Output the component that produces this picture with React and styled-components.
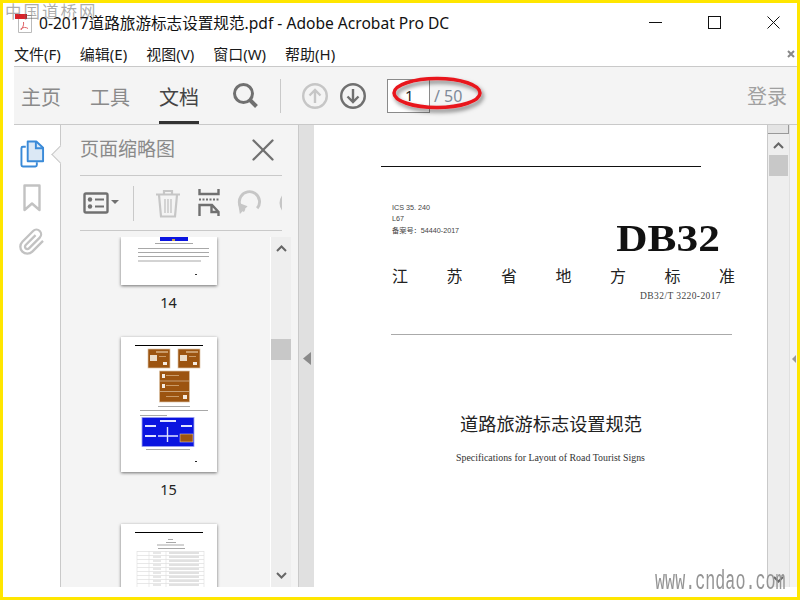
import React from 'react';
import styled, { createGlobalStyle } from 'styled-components';
import { X } from 'lucide-react';

const GlobalStyle = createGlobalStyle`
  html, body {
    margin: 0;
    padding: 0;
    background: #fff;
  }
`;

const Frame = styled.div`
  position: relative;
  box-sizing: border-box;
  width: 800px;
  height: 600px;
  border: 3px solid #ffe600;
  padding-bottom: 10px;
  background: #fff;
  display: flex;
  flex-direction: column;
  overflow: hidden;
  font-family: "Noto Sans", "Noto Sans CJK SC", sans-serif;
`;

const TitleBar = styled.div`
  height: 38px;
  flex: none;
  display: flex;
  align-items: center;
  padding-left: 12px;
`;

const PdfIcon = styled.svg`
  width: 17px;
  height: 19px;
  flex: none;
  margin: 3px 7px 0 0;
`;

const Title = styled.div`
  flex: 1;
  font-size: 15.6px;
  color: #111;
  white-space: nowrap;
`;

const WinButtons = styled.div`
  display: flex;
  align-items: center;
  gap: 46px;
  padding-right: 17px;
`;

const MenuBar = styled.div`
  height: 25px;
  flex: none;
  display: flex;
  align-items: center;
  gap: 19px;
  padding: 0 2px 0 11px;
  font-size: 15px;
  color: #1a1a1a;
`;

const MenuClose = styled.svg`
  margin-left: auto;
  flex: none;
`;

const Toolbar = styled.div`
  height: 59px;
  box-sizing: border-box;
  flex: none;
  margin-left: 11px;
  background: #f4f4f4;
  border-top: 1px solid #c9c9c9;
  border-bottom: 1px solid #c9c9c9;
  display: flex;
  align-items: center;
`;

const Tab = styled.div`
  height: 57px;
  box-sizing: border-box;
  display: flex;
  align-items: center;
  width: 40px;
  justify-content: center;
  margin-left: ${p => p.$gap}px;
  font-size: 20px;
  color: ${p => (p.$active ? '#444' : '#8a8a8a')};
  border-bottom: 3px solid ${p => (p.$active ? '#333' : 'transparent')};
  padding-top: 5px;
  font-family: "Noto Sans CJK SC", sans-serif;
`;

const ToolDivider = styled.div`
  width: 1px;
  height: 34px;
  background: #c9c9c9;
  margin: 0 20px 0 22px;
  flex: none;
`;

const ArrowGap = styled.span`
  width: 10px;
  flex: none;
`;

const PageBox = styled.div`
  box-sizing: border-box;
  width: 43px;
  height: 34px;
  margin-left: 20px;
  background: #fff;
  border: 1px solid #8a8a8a;
  font-size: 15px;
  color: #222;
  padding: 5px 0 0 17px;
`;

const PageCount = styled.div`
  margin-left: 4px;
  font-size: 16px;
  color: #7f8a99;
`;

const Login = styled.div`
  margin-left: auto;
  margin-right: 10px;
  font-size: 20px;
  color: #a0a0a0;
  font-family: "Noto Sans CJK SC", sans-serif;
`;

const Body = styled.div`
  flex: 1;
  min-height: 0;
  display: flex;
`;

const IconRail = styled.div`
  position: relative;
  width: 58px;
  box-sizing: border-box;
  flex: none;
  background: #fff;
  border-right: 1px solid #c9c9c9;
  display: flex;
  flex-direction: column;
  align-items: center;
  padding-top: 15px;
  gap: 16px;
`;

const Notch = styled.div`
  position: absolute;
  top: 23px;
  right: -7px;
  width: 13px;
  height: 13px;
  transform: rotate(45deg);
  background: #f4f4f4;
  border-left: 1px solid #c9c9c9;
  border-bottom: 1px solid #c9c9c9;
  box-sizing: border-box;
`;

const Panel = styled.div`
  width: 237px;
  flex: none;
  background: #f4f4f4;
  padding: 0 16px 0 19px;
  box-sizing: border-box;
  display: flex;
  flex-direction: column;
  min-height: 0;
`;

const PanelHead = styled.div`
  height: 51px;
  box-sizing: border-box;
  flex: none;
  display: flex;
  align-items: center;
  justify-content: space-between;
  border-bottom: 1px solid #c9c9c9;
  padding: 0 0 1px 0;
  font-size: 19px;
  color: #8a8a8a;
  font-family: "Noto Sans CJK SC", sans-serif;
  position: relative;
  z-index: 1;
`;

const HeadLabel = styled.span`
  position: relative;
  top: -2px;
`;

const PanelTools = styled.div`
  height: 55px;
  box-sizing: border-box;
  flex: none;
  display: flex;
  align-items: center;
  border-bottom: 1px solid #c9c9c9;
  padding-left: 3px;
  overflow: hidden;
`;

const ToolsDivider = styled.div`
  width: 1px;
  height: 35px;
  background: #c9c9c9;
  margin: 0 21px 0 14px;
  flex: none;
`;

const ThumbArea = styled.div`
  flex: 1;
  min-height: 0;
  display: flex;
  overflow: hidden;
  margin: 6px -9px 0 0;
`;

const ThumbList = styled.div`
  flex: 1;
  min-height: 0;
  display: flex;
  flex-direction: column;
  align-items: center;
  overflow: hidden;
`;

const Thumb = styled.svg`
  display: block;
  flex: none;
  width: 96px;
  height: ${p => p.$h}px;
  background: #fff;
  box-shadow: 0 1px 3px rgba(0, 0, 0, 0.55);
  margin-right: 13px;
`;

const ThumbLabel = styled.div`
  height: 52px;
  box-sizing: border-box;
  flex: none;
  margin-right: 13px;
  padding-top: 7px;
  font-size: 14.5px;
  line-height: 20px;
  color: #222;
`;

const ThumbScroll = styled.div`
  width: 21px;
  flex: none;
  background: #eeeeee;
  border-left: 1px solid #fff;
  display: flex;
  flex-direction: column;
  align-items: center;
  justify-content: space-between;
  padding: 8px 0;
  box-sizing: border-box;
  position: relative;
`;

const ScrollThumb = styled.div`
  position: absolute;
  top: 102px;
  left: 0;
  width: 20px;
  height: 21px;
  background: #c8c8c8;
`;

const Splitter = styled.div`
  width: 16px;
  flex: none;
  background: #e0e0e0;
  border-left: 1px solid #c9c9c9;
  box-sizing: border-box;
  display: flex;
  align-items: center;
  justify-content: center;
  padding-top: 5px;
`;

const Document = styled.div`
  flex: 1;
  min-width: 0;
  background: #fff;
  display: flex;
  flex-direction: column;
  padding: 41px 0 0 67px;
  box-sizing: border-box;
  font-family: "Liberation Serif", "Noto Sans CJK SC", serif;
  color: #222;
`;

const DocRule = styled.div`
  width: 320px;
  height: 1px;
  background: #111;
  flex: none;
`;

const DocMeta = styled.div`
  margin: 34.5px 0 0 11px;
  font-size: 7.2px;
  line-height: 11.5px;
  color: #444;
  font-family: "Liberation Sans", "Noto Sans CJK SC", sans-serif;
`;

const DocCode = styled.div`
  align-self: flex-end;
  margin: -17.5px 47px 0 0;
  font-size: 38px;
  line-height: 38px;
  font-weight: 700;
  color: #111;
  transform: scaleX(1.14);
  transform-origin: right center;
`;

const Province = styled.div`
  display: flex;
  justify-content: space-between;
  width: 343px;
  margin: 8.5px 0 0 11px;
  font-size: 16px;
  line-height: 20px;
  font-family: "Noto Sans CJK SC", sans-serif;
  color: #222;
`;

const StdNo = styled.div`
  align-self: flex-end;
  margin: 5px 46px 0 0;
  font-size: 9.5px;
  line-height: 12px;
  letter-spacing: 0.4px;
  color: #444;
`;

const DocRule2 = styled.div`
  width: 341px;
  height: 1px;
  background: #aaa;
  margin: 31.5px 0 0 10px;
  flex: none;
`;

const DocTitle = styled.div`
  margin: 76.5px 0 0 79px;
  font-size: 18.2px;
  line-height: 24px;
  color: #222;
  font-family: "Noto Sans CJK SC", sans-serif;
`;

const DocSub = styled.div`
  margin: 17px 0 0 75px;
  font-size: 9.9px;
  line-height: 12px;
  color: #333;
`;

const DocScroll = styled.div`
  width: 22px;
  flex: none;
  border-left: 1px solid #c9c9c9;
  background: #eeeeee;
  display: flex;
  flex-direction: column;
  align-items: center;
  box-sizing: border-box;
`;

const ScrollCap = styled.div`
  width: 21px;
  height: 9px;
  flex: none;
  margin-bottom: 8px;
  background: #e4e4e4;
  border-bottom: 1px solid #999;
  border-right: 1px solid #999;
  box-sizing: border-box;
`;

const DocThumb = styled.div`
  width: 19px;
  height: 21px;
  background: #c8c8c8;
  margin: 6px 0 auto;
  flex: none;
`;

const BottomChevron = styled.div`
  display: flex;
  margin-bottom: 4px;
`;

const RightEdge = styled.div`
  width: 8px;
  flex: none;
  background: #f4f4f4;
  border-left: 1px solid #e0e0e0;
  box-sizing: border-box;
  display: flex;
  align-items: center;
  justify-content: flex-end;
  padding: 5px 1px 0 0;
`;

const EdgeArrow = styled.div`
  width: 0;
  height: 0;
  border-top: 4px solid transparent;
  border-bottom: 4px solid transparent;
  border-right: 4px solid #999;
`;

/* overlays: the annotation ellipse and the two watermarks sit on top of the shot */
const Ellipse = styled.svg`
  position: absolute;
  left: 384px;
  top: 67px;
  pointer-events: none;
`;

const WatermarkCn = styled.div`
  position: absolute;
  left: 2px;
  top: -4px;
  font-size: 16.5px;
  letter-spacing: 2px;
  color: rgba(90, 90, 90, 0.5);
  font-family: "Noto Sans CJK SC", sans-serif;
  pointer-events: none;
`;

const WatermarkUrl = styled.div`
  position: absolute;
  right: 11px;
  bottom: 2px;
  font-size: 27px;
  line-height: 26px;
  color: #959595;
  font-family: "Liberation Mono", monospace;
  white-space: nowrap;
  transform: scaleX(0.62);
  transform-origin: right bottom;
  pointer-events: none;
`;

const MENUS = ['文件(F)', '编辑(E)', '视图(V)', '窗口(W)', '帮助(H)'];

function Chevron({ up, color = '#666' }) {
  return (
    <svg width="11" height="7" viewBox="0 0 11 7" style={{ flex: 'none', position: 'relative' }}>
      <path d={up ? 'M1 6 L5.500 1.500 L10 6' : 'M1 1 L5.500 5.500 L10 1'} fill="none" stroke={color} strokeWidth="2" />
    </svg>
  );
}

function SearchIcon() {
  return (
    <svg width="25" height="25" viewBox="0 0 25 25" style={{ flex: 'none', marginLeft: 34 }}>
      <circle cx="10.500" cy="10.500" r="9" fill="none" stroke="#707070" strokeWidth="3" />
      <path d="M17 17 L23.500 23.500" stroke="#707070" strokeWidth="4" />
    </svg>
  );
}

function CircleArrow({ up, color }) {
  return (
    <svg width="28" height="28" viewBox="0 0 28 28" style={{ flex: 'none' }}>
      <circle cx="14" cy="14" r="11.800" fill="none" stroke={color} strokeWidth="2.400" />
      <path
        d={up ? 'M14 21 V8 M8.500 13.500 L14 8 L19.500 13.500' : 'M14 7 V20 M8.500 14.500 L14 20 L19.500 14.500'}
        fill="none"
        stroke={color}
        strokeWidth="2.400"
      />
    </svg>
  );
}

function PagesIcon() {
  return (
    <svg width="25" height="28" viewBox="0 0 26 29" style={{ marginLeft: 2, flex: 'none' }}>
      <path d="M6 7 H3 a1.500 1.500 0 0 0 -1.500 1.500 V26 a1.500 1.500 0 0 0 1.500 1.500 H16 a1.500 1.500 0 0 0 1.500 -1.500 V23" fill="none" stroke="#3a8ad8" strokeWidth="2" />
      <path d="M8 1.500 H17 L24 8 V22 H8 Z" fill="#dbe8f5" stroke="#3a8ad8" strokeWidth="2" strokeLinejoin="round" />
      <path d="M16.500 1.500 V8.500 H24" fill="none" stroke="#3a8ad8" strokeWidth="2" />
    </svg>
  );
}

function BookmarkIcon() {
  return (
    <svg width="18" height="28" viewBox="0 0 18 28" style={{ flex: 'none' }}>
      <path d="M1.500 1.500 H16.500 V26 L9 19.500 L1.500 26 Z" fill="none" stroke="#c2c2c2" strokeWidth="2.400" strokeLinejoin="round" />
    </svg>
  );
}

function ClipIcon() {
  return (
    <svg width="28" height="28" viewBox="0 0 24 24" style={{ flex: 'none' }}>
      <path d="M21.440 11.050l-9.190 9.190a6 6 0 0 1-8.490-8.490l9.190-9.190a4 4 0 0 1 5.660 5.660l-9.200 9.190a2 2 0 0 1-2.830-2.830l8.490-8.480" fill="none" stroke="#c2c2c2" strokeWidth="2" />
    </svg>
  );
}

function ThumbViewIcon() {
  return (
    <svg width="36" height="22" viewBox="0 0 36 22" style={{ flex: 'none' }}>
      <rect x="1.500" y="1.500" width="23" height="19" rx="1.500" fill="none" stroke="#707070" strokeWidth="2.400" />
      <circle cx="7" cy="7.500" r="2.200" fill="#707070" />
      <circle cx="7" cy="14.500" r="2.200" fill="#707070" />
      <path d="M12 7.500 H21 M12 14.500 H21" stroke="#707070" strokeWidth="2" />
      <path d="M28 8 H36 L32 12 Z" fill="#707070" />
    </svg>
  );
}

function TrashIcon() {
  return (
    <svg width="26" height="29" viewBox="0 0 26 29" style={{ flex: 'none' }}>
      <path d="M1 5.500 H25 M9 5 V2 H17 V5" fill="none" stroke="#c6c6c6" strokeWidth="2.200" />
      <path d="M4 6 L6 27.500 H20 L22 6" fill="none" stroke="#c6c6c6" strokeWidth="2.200" />
      <path d="M10 10 V24 M13 10 V24 M16 10 V24" stroke="#c6c6c6" strokeWidth="1.400" />
    </svg>
  );
}

function ExtractIcon() {
  return (
    <svg width="22" height="28" viewBox="0 0 22 28" style={{ flex: 'none', marginLeft: 17 }}>
      <path d="M1.500 0 V5 H20.500 V0" fill="none" stroke="#707070" strokeWidth="2.400" />
      <path d="M1 10.500 H21" stroke="#707070" strokeWidth="2" strokeDasharray="2 1.500" />
      <path d="M1.500 27 V16 H14 L20.500 23 V27 M13.500 16.500 V23 H20.500" fill="none" stroke="#707070" strokeWidth="2.400" />
    </svg>
  );
}

function RotateIcon() {
  return (
    <svg width="26" height="26" viewBox="0 0 27 27" style={{ flex: 'none', marginLeft: 16 }}>
      <path d="M9 21.500 A10.500 10.500 0 1 1 22 19" fill="none" stroke="#c6c6c6" strokeWidth="3" />
      <path d="M2 13 L12 17 L4 25 Z" fill="#c6c6c6" />
    </svg>
  );
}

function RotateOtherIcon() {
  return (
    <svg width="26" height="26" viewBox="0 0 26 26" style={{ flex: 'none', marginLeft: 17 }}>
      <circle cx="13" cy="13" r="11" fill="none" stroke="#c6c6c6" strokeWidth="3" />
    </svg>
  );
}

function PdfFileIcon() {
  return (
    <PdfIcon viewBox="0 0 17 19">
      <path d="M3.500 1.500 H16.500 V18.500 H3.500 Z" fill="#fff" stroke="#bbb" />
      <rect x="0" y="0" width="12" height="5" fill="#d8232a" />
      <path d="M6 16 C8 13 9 11 8.500 8 M5.500 15 C8 13 11 13 13 14.500" fill="none" stroke="#e0656a" strokeWidth="1" />
    </PdfIcon>
  );
}

// tiny grey stand-ins for the text of a page at thumbnail scale
function Lines({ rows, color = '#a8a8a8' }) {
  return rows.map(([x1, x2, y], i) => (
    <rect key={i} x={x1} y={y} width={x2 - x1} height="1" fill={color} />
  ));
}

function TextPage() {
  return (
    <Thumb $h={48} viewBox="0 0 96 48">
      <rect x="39" y="0" width="28" height="4" fill="#0a14e0" />
      <rect x="51" y="2" width="3" height="2" fill="#c9a24a" />
      <Lines rows={[[34, 72, 6], [17, 88, 11], [17, 88, 15], [17, 88, 19], [17, 80, 23.500]]} />
      <rect x="74" y="37" width="2" height="1" fill="#333" />
    </Thumb>
  );
}

function BrownSign({ x, y }) {
  return (
    <g>
      <rect x={x} y={y} width="22" height="19" fill="#9c5410" stroke="#dcc3a6" strokeWidth="0.700" />
      <rect x={x + 2} y={y + 6} width="7" height="6" fill="#eadbc8" />
      <rect x={x + 8} y={y + 2} width="12" height="2" fill="#c99a68" />
      <rect x={x + 11} y={y + 7} width="7" height="1" fill="#c99a68" />
      <rect x={x + 15} y={y + 13} width="4" height="3" fill="#f4eadf" />
    </g>
  );
}

function SignPage() {
  return (
    <Thumb $h={135} viewBox="0 0 96 135">
      <rect x="14" y="8" width="68" height="1" fill="#000" />
      <BrownSign x={27} y={12} />
      <BrownSign x={57} y={12} />
      <rect x="38.500" y="34" width="30" height="31" fill="#9c5410" stroke="#dcc3a6" strokeWidth="0.700" />
      <path d="M38.500 44 H68.500 M38.500 54.500 H68.500" stroke="#dcc3a6" strokeWidth="0.700" />
      <Lines color="#c99a68" rows={[[45, 58, 38], [45, 58, 48], [45, 58, 59]]} />
      <rect x="41" y="37" width="3" height="4" fill="#f4eadf" />
      <rect x="41" y="47" width="3" height="4" fill="#f4eadf" />
      <rect x="62" y="58" width="4" height="4" fill="#f4eadf" />
      <Lines rows={[[37, 69, 69], [19, 87, 73], [19, 46, 78], [25, 69, 112]]} />
      <rect x="21" y="80.500" width="52" height="29" fill="#0a14e0" stroke="#9ca0f0" strokeWidth="0.800" />
      <rect x="39" y="83" width="16" height="2" fill="#dfe2ff" />
      <rect x="24" y="88" width="11" height="2" fill="#dfe2ff" />
      <rect x="60" y="88" width="11" height="2" fill="#dfe2ff" />
      <rect x="24" y="98" width="11" height="2" fill="#dfe2ff" />
      <path d="M46.500 90 V105 M37 99 H57" stroke="#dfe2ff" strokeWidth="1.400" />
      <rect x="59" y="97" width="13" height="8" fill="#9c5410" stroke="#eadbc8" strokeWidth="0.500" />
      <rect x="74" y="124" width="2" height="1" fill="#222" />
    </Thumb>
  );
}

function TablePage() {
  const rows = [27, 31, 35, 39, 43, 47, 51, 55, 59];
  return (
    <Thumb $h={70} viewBox="0 0 96 70">
      <rect x="14" y="8" width="68" height="1" fill="#000" />
      <Lines rows={[[47, 52, 15], [45, 55, 18], [36, 63, 20.500], [37, 64, 24]]} />
      {rows.map(y => (
        <g key={y}>
          <rect x="16" y={y} width="67" height="0.600" fill="#d9d9d9" />
          <rect x="48" y={y + 1.500} width="30" height="1" fill="#c4c4c4" />
          <rect x="32" y={y + 1.500} width="8" height="1" fill="#cfcfcf" />
        </g>
      ))}
      <path d="M16 27 V70 M28 27 V70 M45 27 V70 M83 27 V70" stroke="#dedede" strokeWidth="0.600" />
    </Thumb>
  );
}

export default function App() {
  return (
    <Frame>
      <GlobalStyle />
      <TitleBar>
        <PdfFileIcon />
        <Title>0-2017道路旅游标志设置规范.pdf - Adobe Acrobat Pro DC</Title>
        <WinButtons>
          <svg width="13" height="1" viewBox="0 0 13 1"><rect width="13" height="1" fill="#111" /></svg>
          <svg width="13" height="13" viewBox="0 0 13 13"><rect x="0.500" y="0.500" width="12" height="12" fill="none" stroke="#111" /></svg>
          <svg width="13" height="13" viewBox="0 0 13 13"><path d="M0.500 0.500 L12.500 12.500 M12.500 0.500 L0.500 12.500" stroke="#111" /></svg>
        </WinButtons>
      </TitleBar>
      <MenuBar>
        {MENUS.map(m => (
          <span key={m}>{m}</span>
        ))}
        <MenuClose width="8" height="8" viewBox="0 0 8 8">
          <path d="M1 1 L7 7 M7 1 L1 7" stroke="#888" strokeWidth="2" />
        </MenuClose>
      </MenuBar>
      <Toolbar>
        <Tab $gap={7}>主页</Tab>
        <Tab $gap={29}>工具</Tab>
        <Tab $gap={29} $active>文档</Tab>
        <SearchIcon />
        <ToolDivider />
        <CircleArrow up color="#c6c6c6" />
        <ArrowGap />
        <CircleArrow color="#707070" />
        <PageBox>1</PageBox>
        <PageCount>/ 50</PageCount>
        <Login>登录</Login>
      </Toolbar>
      <Body>
        <IconRail>
          <PagesIcon />
          <BookmarkIcon />
          <ClipIcon />
          <Notch />
        </IconRail>
        <Panel>
          <PanelHead>
            <HeadLabel>页面缩略图</HeadLabel>
            <X size={38} color="#707070" strokeWidth={1.45} />
          </PanelHead>
          <PanelTools>
            <ThumbViewIcon />
            <ToolsDivider />
            <TrashIcon />
            <ExtractIcon />
            <RotateIcon />
            <RotateOtherIcon />
          </PanelTools>
          <ThumbArea>
            <ThumbList>
              <TextPage />
              <ThumbLabel>14</ThumbLabel>
              <SignPage />
              <ThumbLabel>15</ThumbLabel>
              <TablePage />
            </ThumbList>
            <ThumbScroll>
              <Chevron up />
              <ScrollThumb />
              <Chevron />
            </ThumbScroll>
          </ThumbArea>
        </Panel>
        <Splitter>
          <svg width="8" height="13" viewBox="0 0 8 13"><path d="M8 0 V13 L0 6.500 Z" fill="#8a8a8a" /></svg>
        </Splitter>
        <Document>
          <DocRule />
          <DocMeta>
            ICS 35. 240<br />L67<br />备案号：54440-2017
          </DocMeta>
          <DocCode>DB32</DocCode>
          <Province>
            {'江苏省地方标准'.split('').map(c => (
              <span key={c}>{c}</span>
            ))}
          </Province>
          <StdNo>DB32/T 3220-2017</StdNo>
          <DocRule2 />
          <DocTitle>道路旅游标志设置规范</DocTitle>
          <DocSub>Specifications for Layout of Road Tourist Signs</DocSub>
        </Document>
        <DocScroll>
          <ScrollCap />
          <Chevron up />
          <DocThumb />
          <BottomChevron><Chevron /></BottomChevron>
        </DocScroll>
        <RightEdge><EdgeArrow /></RightEdge>
      </Body>
      <Ellipse width="110" height="50" viewBox="0 0 110 50">
        <defs>
          <filter id="sh" x="-20%" y="-30%" width="140%" height="170%">
            <feDropShadow dx="2" dy="3" stdDeviation="2" floodColor="#000" floodOpacity="0.5" />
          </filter>
        </defs>
        <ellipse cx="50" cy="23" rx="43" ry="14.500" fill="none" stroke="#e8141c" strokeWidth="3.500" filter="url(#sh)" />
      </Ellipse>
      <WatermarkCn>中国道桥网</WatermarkCn>
      <WatermarkUrl>www.cndao.com</WatermarkUrl>
    </Frame>
  );
}
